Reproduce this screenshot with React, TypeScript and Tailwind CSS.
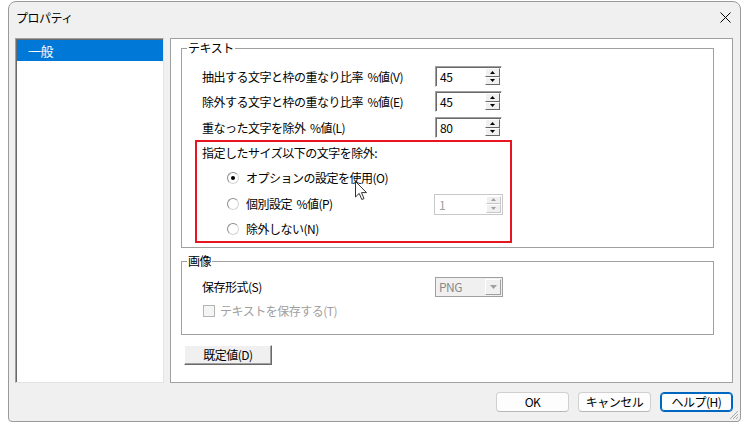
import React from "react";

const FONT = { fontFamily: '"Noto Sans CJK JP", "Noto Sans", sans-serif' };

function SpinBtn({ up, disabled }: { up?: boolean; disabled?: boolean }) {
  return (
    <div
      className={`flex-1 flex items-center justify-center bg-[#f0f0f0] border border-t-white border-l-white ${
        disabled ? "border-b-[#c8c8c8] border-r-[#c8c8c8]" : "border-b-[#696969] border-r-[#696969]"
      }`}
    >
      <svg width="5" height="3" viewBox="0 0 5 3">
        {up ? (
          <path d="M0 3 L2.5 0 L5 3 Z" fill={disabled ? "#a0a0a0" : "#000"} />
        ) : (
          <path d="M0 0 L2.5 3 L5 0 Z" fill={disabled ? "#a0a0a0" : "#000"} />
        )}
      </svg>
    </div>
  );
}

function SpinBox({ value, disabled }: { value: string; disabled?: boolean }) {
  return (
    <div
      className={`flex h-[21px] border ${
        disabled
          ? "w-[69px] border-[#c8c8c8] bg-white"
          : "w-[67px] border-t-[#a0a0a0] border-l-[#a0a0a0] border-b-white border-r-white shadow-[inset_1px_1px_0_#696969] bg-white"
      }`}
    >
      <div
        className={`flex-1 pl-[4px] pt-[1px] text-[12px] leading-[18px] ${
          disabled ? "text-[#a0a0a0]" : "text-black"
        }`}
      >
        {value}
      </div>
      <div className="w-[16px] flex flex-col py-[1px] pr-[1px]">
        <SpinBtn up disabled={disabled} />
        <SpinBtn disabled={disabled} />
      </div>
    </div>
  );
}

function Radio({ checked }: { checked?: boolean }) {
  return (
    <div className="w-[12px] h-[12px] rounded-full border border-[#8c8c8c] border-b-[#d4d4d4] border-r-[#d4d4d4] bg-white flex items-center justify-center shrink-0">
      {checked && <div className="w-[4px] h-[4px] rounded-full bg-black" />}
    </div>
  );
}

function WinButton({ label, focused }: { label: string; focused?: boolean }) {
  return (
    <div
      className={`w-[73px] h-[20px] rounded-[4px] bg-[#fdfdfd] flex items-center justify-center text-[12px] text-black ${
        focused
          ? "border border-[#0067c0] shadow-[inset_0_0_0_1px_#0067c0]"
          : "border border-[#d0d0d0] border-b-[#b8b8b8]"
      }`}
    >
      {label}
    </div>
  );
}

export default function App() {
  return (
    <div
      className="relative w-[748px] h-[428px] bg-white overflow-hidden tracking-[-0.5px] text-black"
      style={FONT}
    >
      <div className="ml-[8px] mt-[1px] w-[733px] h-[421px] border border-[#9a9a9a] rounded-t-[8px] rounded-b-[4px] bg-[#f0f0f0] flex flex-col relative">
        {/* Title bar */}
        <div className="h-[29px] flex items-center justify-between pl-[7px] pr-[9px]">
          <span className="text-[12px] leading-[16px] pt-[2px]">プロパティ</span>
          <svg width="11" height="11" viewBox="0 0 11 11" className="mt-[2px]">
            <path d="M0.5 0.5 L10.5 10.5 M10.5 0.5 L0.5 10.5" stroke="#000" strokeWidth="1" />
          </svg>
        </div>

        {/* Content */}
        <div className="flex pt-[7px] pl-[6px]">
          {/* Left list */}
          <div className="w-[149px] h-[345px] bg-white border border-t-[#a0a0a0] border-l-[#a0a0a0] border-b-[#e3e3e3] border-r-[#e3e3e3] shadow-[inset_1px_1px_0_#696969]">
            <div className="mt-[1px] ml-[1px] h-[21px] bg-[#0078d7] text-white text-[13px] flex items-center pl-[11px]">
              一般
            </div>
          </div>

          {/* Right panel */}
          <div className="ml-[6px] w-[563px] h-[345px] bg-white border border-[#a0a0a0] flex flex-col">
            {/* Group: テキスト */}
            <div className="relative mt-[9px] ml-[10px] w-[533px] h-[200px] border border-[#a0a0a0] flex flex-col">
              <span className="absolute left-[5px] top-[-9px] bg-white px-[1px] text-[12px] leading-[16px]">
                テキスト
              </span>
              <div className="mt-[17px] flex items-center h-[21px] pl-[20px] text-[12px]">
                <span className="w-[233px] whitespace-pre">抽出する文字と枠の重なり比率  %値(V)</span>
                <SpinBox value="45" />
              </div>
              <div className="mt-[4px] flex items-center h-[21px] pl-[20px] text-[12px]">
                <span className="w-[233px] whitespace-pre">除外する文字と枠の重なり比率  %値(E)</span>
                <SpinBox value="45" />
              </div>
              <div className="mt-[5px] flex items-center h-[21px] pl-[20px] text-[12px]">
                <span className="w-[233px] whitespace-pre">重なった文字を除外  %値(L)</span>
                <SpinBox value="80" />
              </div>

              {/* Red highlight box */}
              <div className="mt-[2px] ml-[13px] w-[317px] h-[103px] border-2 border-[#e8141f] flex flex-col text-[12px]">
                <div className="pt-[3px] pl-[5px] h-[19px] leading-[16px]">指定したサイズ以下の文字を除外:</div>
                <div className="mt-[7px] h-[20px] flex items-center pl-[30px]">
                  <Radio checked />
                  <span className="ml-[7px]">オプションの設定を使用(O)</span>
                </div>
                <div className="mt-[6px] h-[20px] flex items-center pl-[30px]">
                  <div className="w-[207px] flex items-center">
                    <Radio />
                    <span className="ml-[7px] whitespace-pre">個別設定  %値(P)</span>
                  </div>
                  <SpinBox value="1" disabled />
                </div>
                <div className="mt-[5px] h-[20px] flex items-center pl-[30px]">
                  <Radio />
                  <span className="ml-[7px]">除外しない(N)</span>
                </div>
              </div>
            </div>

            {/* Group: 画像 */}
            <div className="relative mt-[13px] ml-[10px] w-[533px] h-[74px] border border-[#a0a0a0] flex flex-col">
              <span className="absolute left-[5px] top-[-9px] bg-white px-[1px] text-[12px] leading-[16px]">
                画像
              </span>
              <div className="mt-[15px] flex items-center h-[20px] pl-[20px] text-[12px]">
                <span className="w-[233px]">保存形式(S)</span>
                <div className="w-[68px] h-[20px] flex border border-[#a0a0a0] bg-[#f0f0f0]">
                  <div className="flex-1 pl-[3px] text-[#8a8a8a] leading-[18px]">PNG</div>
                  <div className="w-[16px] m-[1px] bg-[#f0f0f0] border border-t-white border-l-white border-b-[#a0a0a0] border-r-[#a0a0a0] flex items-center justify-center">
                    <svg width="7" height="4" viewBox="0 0 7 4">
                      <path d="M0 0 L3.5 4 L7 0 Z" fill="#a0a0a0" />
                    </svg>
                  </div>
                </div>
              </div>
              <div className="mt-[6px] flex items-center h-[16px] pl-[21px] text-[12px]">
                <div className="w-[12px] h-[12px] border border-[#b4b4b4] bg-[#f4f4f4]" />
                <span className="ml-[5px] text-[#a0a0a0]">テキストを保存する(T)</span>
              </div>
            </div>

            {/* Default button */}
            <div className="mt-[10px] ml-[13px] w-[88px] h-[20px] bg-[#f0f0f0] border border-t-white border-l-white border-b-[#696969] border-r-[#696969] shadow-[inset_-1px_-1px_0_#a0a0a0] flex items-center justify-center text-[12px]">
              既定値(D)
            </div>
          </div>
        </div>

        {/* Footer buttons */}
        <div className="mt-[9px] flex justify-end gap-[9px] pr-[7px]">
          <WinButton label="OK" />
          <WinButton label="キャンセル" />
          <WinButton label="ヘルプ(H)" focused />
        </div>

        {/* Size grip */}
        <svg
          width="11"
          height="11"
          viewBox="0 0 11 11"
          className="absolute right-[1px] bottom-[1px]"
        >
          <path d="M10 2 L2 10 M10 5 L5 10 M10 8 L8 10" stroke="#a8a8a8" strokeWidth="1" />
        </svg>
      </div>

      {/* Mouse cursor */}
      <svg
        width="13"
        height="20"
        viewBox="0 0 13 20"
        className="absolute left-[355px] top-[181px]"
      >
        <path
          d="M0.5 0.5 L0.5 16 L4.2 12.4 L6.8 18.5 L9 17.6 L6.5 11.6 L11.5 11.6 Z"
          fill="#fff"
          stroke="#333"
          strokeWidth="1"
          strokeLinejoin="round"
        />
      </svg>
    </div>
  );
}
